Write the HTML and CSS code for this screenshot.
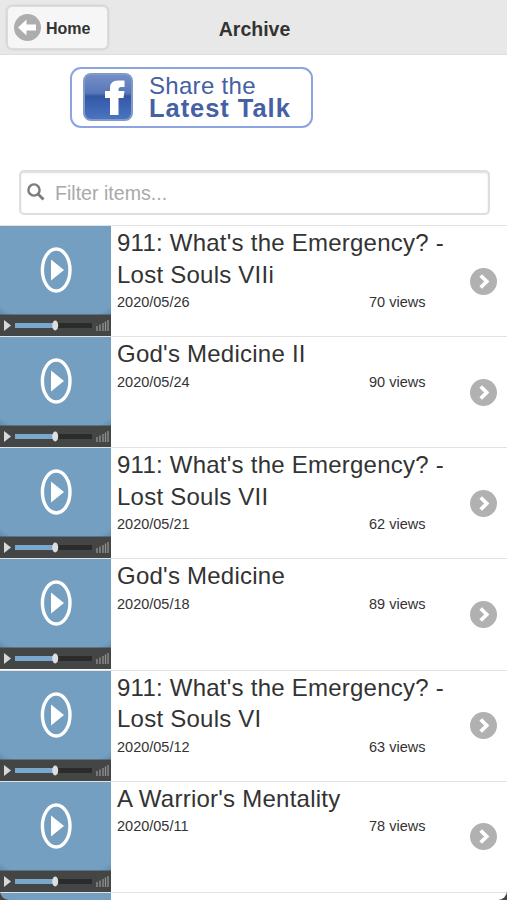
FILE: index.html
```
<!DOCTYPE html>
<html lang="en">
<head>
  <meta charset="UTF-8">
  <title>Archive</title>
  <meta name="viewport" content="width=device-width, initial-scale=1">
  <link rel="stylesheet" href="styles.css">
</head>
<body>
  <svg class="sprite" width="0" height="0">
    <defs>
      <radialGradient id="sky" cx="50%" cy="46%" r="76%">
        <stop offset="0.87" stop-color="#759fc0"/>
        <stop offset="1" stop-color="#5b86ac"/>
      </radialGradient>
      <symbol id="thumb" viewBox="0 0 111 110">
        <rect width="111" height="110" fill="#444645"/>
        <rect width="111" height="88.5" fill="url(#sky)"/>
        <ellipse cx="56.2" cy="44" rx="13.8" ry="21" fill="none" stroke="#fff" stroke-width="3.4"/>
        <path d="M51 33.5 L64 44 L51 54.5 Z" fill="#fff"/>
        <path d="M4 94 L11 99.5 L4 105 Z" fill="#d8d8d8"/>
        <rect x="15" y="97" width="77" height="5" fill="#2b2b2b"/>
        <rect x="15" y="97" width="39" height="5" fill="#79a7cd"/>
        <ellipse cx="55.2" cy="99.5" rx="3" ry="5" fill="#dedede"/>
        <path d="M97 105v-5M100 105v-6.5M103 105v-8M105.5 105v-9.5M108 105v-11" stroke="#929292" stroke-width="1.3"/>
      </symbol>
      <symbol id="go" viewBox="0 0 27 27">
        <circle cx="13.5" cy="13.5" r="13.5" fill="#b1b1b1"/>
        <path d="M10.7 7.5 L16.7 13.5 L10.7 19.5" fill="none" stroke="#fff" stroke-width="3.8"/>
      </symbol>
    </defs>
  </svg>

  <header>
    <a href="#" class="home-btn">
      <svg width="27" height="27" viewBox="0 0 27 27">
        <circle cx="13.5" cy="13.5" r="13.5" fill="#adadad"/>
        <path d="M4 13.5 L12.5 5.5 V10.5 H22 V16.5 H12.5 V21.5 Z" fill="#fff"/>
      </svg>
      <span>Home</span>
    </a>
    <h1>Archive</h1>
  </header>

  <a href="#" class="share">
    <svg width="50" height="48" viewBox="0 0 50 48">
      <defs>
        <linearGradient id="fb" x1="0" y1="0" x2="0" y2="1">
          <stop offset="0" stop-color="#7591c8"/>
          <stop offset="0.42" stop-color="#5876b9"/>
          <stop offset="0.48" stop-color="#3357a5"/>
          <stop offset="1" stop-color="#4a76c4"/>
        </linearGradient>
      </defs>
      <rect x="1" y="1" width="48" height="46" rx="7" fill="url(#fb)" stroke="#829bc4" stroke-width="2"/>
      <path d="M27 42 V25 H22 V18 H27 V15 Q27 7.5 35 7.5 H41.5 V14 H38 Q35.5 14 35.5 16.5 V18 H41.5 L40.5 25 H35.5 V42 Z" fill="#fff"/>
    </svg>
    <span class="share-text">
      <span class="line1">Share the</span>
      <span class="line2">Latest Talk</span>
    </span>
  </a>

  <div class="filter">
    <svg width="18" height="18" viewBox="0 0 18 18">
      <circle cx="7" cy="7" r="5.6" fill="none" stroke="#7c7c7c" stroke-width="2.4"/>
      <path d="M11 11 L16.5 16.5" stroke="#7c7c7c" stroke-width="2.8"/>
    </svg>
    <input type="text" placeholder="Filter items...">
  </div>

  <ul class="list">
    <li>
      <svg class="thumb"><use href="#thumb"/></svg>
      <div class="info">
        <h2>911: What's the Emergency? - Lost Souls VIIi</h2>
        <p><span>2020/05/26</span><span>70 views</span></p>
      </div>
      <svg class="go"><use href="#go"/></svg>
    </li>
    <li>
      <svg class="thumb"><use href="#thumb"/></svg>
      <div class="info">
        <h2>God's Medicine II</h2>
        <p><span>2020/05/24</span><span>90 views</span></p>
      </div>
      <svg class="go"><use href="#go"/></svg>
    </li>
    <li>
      <svg class="thumb"><use href="#thumb"/></svg>
      <div class="info">
        <h2>911: What's the Emergency? - Lost Souls VII</h2>
        <p><span>2020/05/21</span><span>62 views</span></p>
      </div>
      <svg class="go"><use href="#go"/></svg>
    </li>
    <li>
      <svg class="thumb"><use href="#thumb"/></svg>
      <div class="info">
        <h2>God's Medicine</h2>
        <p><span>2020/05/18</span><span>89 views</span></p>
      </div>
      <svg class="go"><use href="#go"/></svg>
    </li>
    <li>
      <svg class="thumb"><use href="#thumb"/></svg>
      <div class="info">
        <h2>911: What's the Emergency? - Lost Souls VI</h2>
        <p><span>2020/05/12</span><span>63 views</span></p>
      </div>
      <svg class="go"><use href="#go"/></svg>
    </li>
    <li>
      <svg class="thumb"><use href="#thumb"/></svg>
      <div class="info">
        <h2>A Warrior's Mentality</h2>
        <p><span>2020/05/11</span><span>78 views</span></p>
      </div>
      <svg class="go"><use href="#go"/></svg>
    </li>
    <li class="last">
      <svg class="thumb"><use href="#thumb"/></svg>
    </li>
  </ul>
  <div class="corners"></div>
</body>
</html>
```
FILE: styles.css
```
* {
  box-sizing: border-box;
}
body {
  position: relative;
  margin: 0;
  height: 900px;
  overflow: hidden;
  font-family: "Liberation Sans", Arial, sans-serif;
  background: #fff;
  color: #333;
}
a {
  color: inherit;
  text-decoration: none;
}
.sprite {
  position: absolute;
}
header {
  display: grid;
  grid-template-columns: 108px 1fr 106px;
  align-items: center;
  height: 55px;
  background: #e8e8e8;
  border-bottom: 1px solid #dedede;
}
.home-btn {
  display: flex;
  align-items: center;
  gap: 5px;
  height: 43px;
  margin: 1px 0 0 7px;
  padding-left: 6px;
  background: #f6f6f6;
  border: 1px solid #dcdcdc;
  border-radius: 5px;
  box-shadow: 0 0 3px #0003;
  font-size: 16px;
  font-weight: bold;
}
.home-btn span {
  margin-top: 3px;
}
h1 {
  margin: 4px 0 0;
  font-size: 19.5px;
  text-align: center;
}
.share {
  display: flex;
  align-items: center;
  width: 243px;
  height: 61px;
  margin: 12px 0 0 70px;
  padding: 0 0 1px 11px;
  border: 2px solid #8da4e0;
  border-radius: 11px;
  color: #4660a4;
}
.share-text {
  display: flex;
  flex-direction: column;
  margin: -2px 0 0 16px;
  white-space: nowrap;
}
.line1 {
  font-size: 24px;
  line-height: 23px;
  letter-spacing: 0.3px;
}
.line2 {
  font-size: 25.5px;
  font-weight: bold;
  line-height: 22px;
  letter-spacing: 0.95px;
}
.filter {
  display: flex;
  align-items: center;
  height: 45px;
  margin: 42px 17px 10px 19px;
  padding-left: 6px;
  border: 2px solid #dedede;
  border-radius: 5px;
  box-shadow: inset 0 1px 2px #0002;
}
.filter svg {
  margin-bottom: 2px;
}
.filter input {
  flex: 1;
  margin: 2px 0 0 10px;
  padding: 0;
  border: none;
  outline: none;
  background: none;
  font-family: inherit;
  font-size: 19.6px;
}
.filter input::placeholder {
  color: #a9a9a9;
}
.list {
  margin: 0;
  padding: 0;
  list-style: none;
}
.list li {
  display: flex;
  align-items: center;
  height: 111.15px;
  border-top: 1px solid #e2e2e2;
}
.list li.last {
  align-items: flex-start;
  height: 8px;
  overflow: hidden;
}
.thumb {
  flex: none;
  width: 111px;
  height: 110px;
}
.info {
  align-self: stretch;
  width: 345px;
  margin-left: 6px;
  padding-top: 1px;
}
.info h2 {
  margin: 0;
  font-size: 24px;
  font-weight: normal;
  line-height: 31.5px;
  letter-spacing: 0.24px;
}
.info p {
  display: grid;
  grid-template-columns: 252px 1fr;
  margin: 3px 0 0;
  font-size: 14.5px;
  line-height: 18px;
}
.go {
  width: 27px;
  height: 27px;
  margin-left: 8px;
}
/* rounded screen corners */
.corners {
  position: absolute;
  left: 0;
  right: 0;
  bottom: 0;
  height: 10px;
  overflow: hidden;
}
.corners::after {
  content: "";
  position: absolute;
  inset: -10px 0 0;
  border-radius: 9px;
  box-shadow: 0 0 0 9px #444;
}
```
